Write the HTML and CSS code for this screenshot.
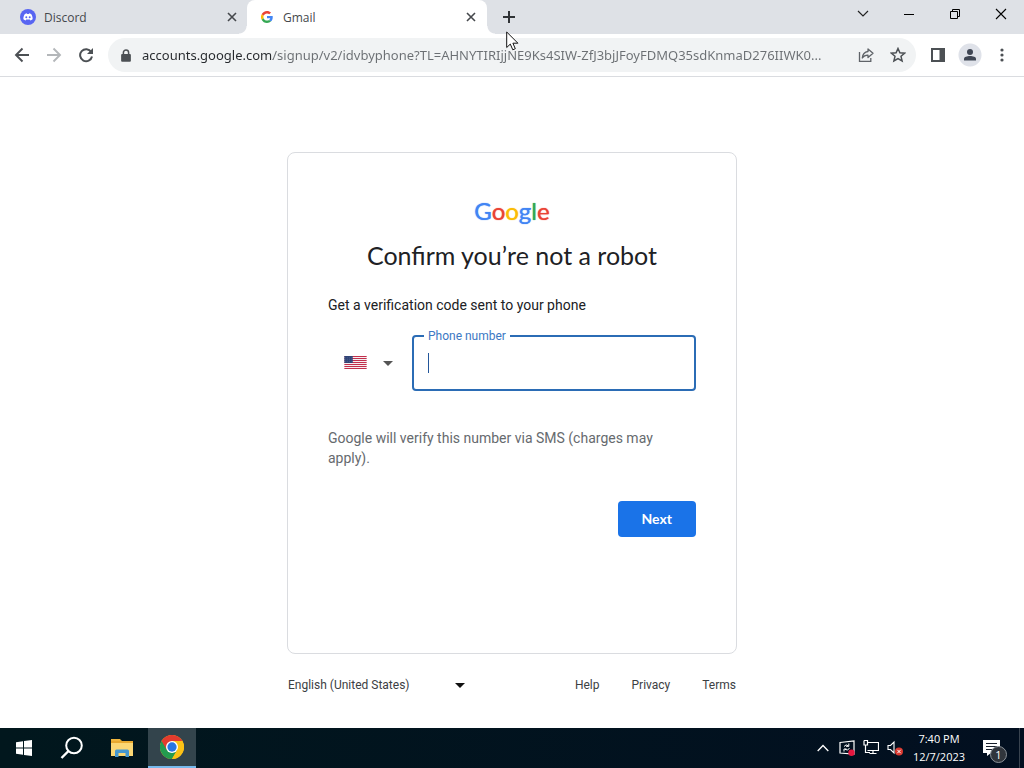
FILE: index.html
```html
<!DOCTYPE html>
<html lang="en">
<head>
    <meta charset="UTF-8">
    <meta name="viewport" content="width=device-width, initial-scale=1.0">
    <title>Gmail</title>
    <link rel="stylesheet" href="styles.css">
</head>
<body>
    <header class="browser">
        <div class="tabs">
            <div class="tab">
                <svg class="favicon" viewBox="0 0 16 16"><circle cx="8" cy="8" r="8" fill="#5865f2"/><path d="M4.9 4.9 6.8 4.3 7.2 5h1.6l.4-.7 1.9.6c1.2 1.800 1.700 3.500 1.500 5.400-.7.600-1.500.900-2.300 1.100l-.5-.9H6.200l-.5.9c-.8-.2-1.600-.500-2.300-1.100-.2-1.900.3-3.600 1.500-5.400z" fill="#fff"/><circle cx="6.300" cy="8.300" r="1" fill="#5865f2"/><circle cx="9.700" cy="8.300" r="1" fill="#5865f2"/></svg>
                <span class="tab-title">Discord</span>
                <button class="tab-close" aria-label="Close Discord"><svg width="10" height="10" viewBox="0 0 10 10"><path d="M1 1l8 8M9 1l-8 8" stroke="#45484c" stroke-width="1.600"/></svg></button>
            </div>
            <div class="tab active">
                <svg class="favicon small" viewBox="0 0 48 48"><path fill="#ea4335" d="M24 9.500c3.540 0 6.710 1.220 9.210 3.600l6.850-6.850C35.900 2.380 30.470 0 24 0 14.620 0 6.510 5.380 2.560 13.220l7.980 6.190C12.430 13.720 17.740 9.500 24 9.500z"/><path fill="#4285f4" d="M46.980 24.550c0-1.570-.15-3.090-.38-4.550H24v9.020h12.940c-.58 2.960-2.260 5.480-4.780 7.180l7.730 6c4.510-4.180 7.090-10.360 7.090-17.650z"/><path fill="#fbbc05" d="M10.530 28.590A14.500 14.500 0 0 1 10.530 19.410l-7.980-6.190a24 24 0 0 0 0 21.560z"/><path fill="#34a853" d="M24 48c6.480 0 11.930-2.130 15.890-5.810l-7.730-6c-2.150 1.450-4.920 2.300-8.160 2.300-6.260 0-11.570-4.220-13.470-9.910l-7.980 6.190C6.510 42.620 14.620 48 24 48z"/></svg>
                <span class="tab-title">Gmail</span>
                <button class="tab-close" aria-label="Close Gmail"><svg width="10" height="10" viewBox="0 0 10 10"><path d="M1 1l8 8M9 1l-8 8" stroke="#45484c" stroke-width="1.600"/></svg></button>
            </div>
            <button class="new-tab" aria-label="New tab"><svg width="12" height="12" viewBox="0 0 12 12"><path d="M6 0v12M0 6h12" stroke="#303336" stroke-width="2"/></svg></button>
            <div class="window-buttons">
                <button aria-label="Search tabs"><svg width="12" height="12" viewBox="0 0 12 12"><path d="M1 3l5 5 5-5" fill="none" stroke="#222" stroke-width="1.200"/></svg></button>
                <button aria-label="Minimize"><svg width="12" height="12" viewBox="0 0 12 12"><path d="M1 6.500h10" stroke="#000"/></svg></button>
                <button aria-label="Restore"><svg width="12" height="12" viewBox="0 0 12 12"><path d="M1.500 3.500h7v7h-7zM3.500 3.500v-2h7v7h-2" fill="none" stroke="#000"/></svg></button>
                <button aria-label="Close"><svg width="12" height="12" viewBox="0 0 12 12"><path d="M1 1l10 10M11 1L1 11" stroke="#000" stroke-width="1.100"/></svg></button>
            </div>
        </div>

        <div class="toolbar">
            <button class="nav-btn" aria-label="Back"><svg viewBox="0 0 16 16"><path d="M15 8H2M8.500 1.500L2 8l6.500 6.500" fill="none" stroke="#4c5054" stroke-width="1.900"/></svg></button>
            <button class="nav-btn" aria-label="Forward"><svg viewBox="0 0 16 16"><path d="M1 8h13M7.500 1.500L14 8l-6.500 6.500" fill="none" stroke="#b4b7ba" stroke-width="1.900"/></svg></button>
            <button class="nav-btn" aria-label="Reload"><svg viewBox="0 0 16 16"><path d="M13.200 5A6 6 0 1 0 14 9.500" fill="none" stroke="#4c5054" stroke-width="2"/><path d="M15 1v6H9z" fill="#4c5054"/></svg></button>
            <div class="omnibox">
                <svg class="lock" viewBox="0 0 10 12"><path d="M2.600 5.500V3.300a2.400 2.400 0 0 1 4.800 0v2.200" fill="none" stroke="#4c5054" stroke-width="1.400"/><rect x="0.500" y="4.500" width="9" height="7.300" rx="1" fill="#4c5054"/></svg>
                <input class="url" type="text" aria-label="Address" value="accounts.google.com/signup/v2/idvbyphone?TL=AHNYTIRIjjNE9Ks4SIW-ZfJ3bjJFoyFDMQ35sdKnmaD276IIWK0...">
                <button aria-label="Share"><svg viewBox="0 0 16 16"><path d="M1.500 5v9.300h11.300V11" fill="none" stroke="#5f6368" stroke-width="1.300"/><path d="M10 2l5 4.300-5 4.300V8.200C7.500 8.100 5.700 9 4.300 11 4.600 7.800 6.300 5 10 4.500z" fill="none" stroke="#5f6368" stroke-width="1.300" stroke-linejoin="round"/></svg></button>
                <button aria-label="Bookmark"><svg viewBox="0 0 16 16"><path d="M8 1.500l1.900 4.300 4.700.4-3.600 3.100 1.100 4.600L8 11.500l-4.100 2.400L5 9.300 1.400 6.200l4.700-.4z" fill="none" stroke="#4c5054" stroke-width="1.500"/></svg></button>
            </div>
            <button class="nav-btn" aria-label="Side panel"><svg viewBox="0 0 16 16"><path d="M2 2h12v12H2z" fill="none" stroke="#4c5054" stroke-width="2"/><path d="M9.500 2H14v12H9.500z" fill="#4c5054"/></svg></button>
            <button class="nav-btn avatar" aria-label="Profile"><svg viewBox="0 0 16 16"><circle cx="8" cy="5" r="3" fill="#3f4654"/><path d="M2 13.500v-1.700C2 9.900 5 9 8 9s6 .9 6 2.800v1.700z" fill="#3f4654"/></svg></button>
            <button class="nav-btn" aria-label="Menu"><svg viewBox="0 0 16 16" fill="#4c5054"><circle cx="8" cy="3" r="1.600"/><circle cx="8" cy="8" r="1.600"/><circle cx="8" cy="13" r="1.600"/></svg></button>
        </div>
        <svg class="pointer" width="14" height="21" viewBox="0 0 14 21"><path d="M.7 1v15.500l3.600-3.400 2.500 5.700 2.500-1.100-2.400-5.500h5z" fill="#fff" stroke="#111"/></svg>
    </header>

    <main class="page">
        <form class="card">
            <div class="logo" role="img" aria-label="Google"><span class="blue">G</span><span class="red">o</span><span class="yellow">o</span><span class="blue">g</span><span class="green">l</span><span class="red">e</span></div>
            <h1>Confirm you’re not a robot</h1>
            <p class="intro">Get a verification code sent to your phone</p>
            <div class="phone-row">
                <div class="country">
                    <select aria-label="Country"><option value="us"></option></select>
                    <svg class="flag" width="23" height="13" viewBox="0 0 24 14"><path fill="#f6eef0" d="M0 0h24v14H0z"/><path d="M0 .5h24M0 2.700h24M0 4.900h24M0 7h24M0 9.200h24M0 11.300h24M0 13.500h24" stroke="#c22f4c" stroke-width="1.100"/><path fill="#2f4477" d="M0 0h9v7.500H0z"/><path d="M1 2h7M1 4h7M1 6h7" stroke="#6d7ba3" stroke-width=".5" stroke-dasharray="1 1"/></svg>
                    <svg class="arrow" width="10" height="5" viewBox="0 0 10 5"><path d="M0 0h10L5 5z" fill="#555"/></svg>
                </div>
                <div class="field">
                    <input id="phone" type="tel">
                    <label for="phone">Phone number</label>
                    <span class="caret"></span>
                </div>
            </div>
            <p class="note">Google will verify this number via SMS (charges may apply).</p>
            <div class="actions"><button type="button" class="next">Next</button></div>
        </form>
        <footer class="footer">
            <div class="language">
                <select aria-label="Language"><option>English (United States)</option></select>
                <svg class="arrow" width="10" height="5" viewBox="0 0 10 5"><path d="M0 0h10L5 5z" fill="#111"/></svg>
            </div>
            <nav>
                <a href="#">Help</a>
                <a href="#">Privacy</a>
                <a href="#">Terms</a>
            </nav>
        </footer>
    </main>

    <div class="taskbar">
        <button aria-label="Start"><svg width="16" height="16" viewBox="0 0 16 16" fill="#fff"><path d="M0 2.200l7-1v6.300H0zM8 1l8-1v7.500H8zM0 8.500h7v6.300l-7-1zM8 8.500h8V16l-8-1z"/></svg></button>
        <button aria-label="Search"><svg width="24" height="24" viewBox="0 0 24 24"><circle cx="14" cy="9.500" r="7.800" fill="none" stroke="#fff" stroke-width="2"/><path d="M8.500 15L1.500 22" stroke="#fff" stroke-width="2.400"/></svg></button>
        <button class="explorer" aria-label="File Explorer"><svg width="22" height="18" viewBox="0 0 22 18"><path d="M0 0h9l2 2h11v15H0z" fill="#e8a92f"/><path d="M0 4h22v13H0z" fill="#fbd774"/><path d="M0 0h9v2H0z" fill="#f0b53d"/><path d="M4 18v-6q0-1.500 1.500-1.500h11Q18 10.500 18 12v6h-3.500v-4h-7v4z" fill="#4597cf"/></svg></button>
        <button class="running" aria-label="Chrome"><svg width="24" height="24" viewBox="0 0 48 48"><circle cx="24" cy="24" r="24" fill="#fbc116"/><path d="M24 24L3.200 12A24 24 0 0 0 24 48l10.400-18z" fill="#239b4f"/><path d="M3.200 12A24 24 0 0 1 44.800 12H24v12l-10.400 6z" fill="#e33b2e"/><path d="M44.800 12A24 24 0 0 1 24 48l10.400-18V12z" fill="#fbc116"/><circle cx="24" cy="24" r="12" fill="#fff"/><circle cx="24" cy="24" r="9.300" fill="#2875e2"/></svg></button>
        <div class="tray">
            <svg width="12" height="8" viewBox="0 0 12 8"><path d="M.7 7L6 1.500 11.300 7" fill="none" stroke="#fff" stroke-width="1.300"/></svg>
            <svg width="16" height="16" viewBox="0 0 16 16"><path d="M1 2.500L15 1v13L1 13z" fill="none" stroke="#fff" stroke-width="1.200"/><path d="M5 6.500q2-3 4.500-.5M9.800 3.500V6.300H7M10.500 8q-1.500 3.500-4.500 1.300M5 11.500V9h2.500" fill="none" stroke="#fff"/><circle cx="12.500" cy="12.700" r="3.200" fill="#e5173f"/></svg>
            <svg width="16" height="16" viewBox="0 0 16 16"><path d="M4.500 2.500h11v8h-11M1 .5v4.500h3.500V.5H1M2.500 5v7.500H7M10 10.500v3M6.500 13.500h7" fill="none" stroke="#fff" stroke-width="1.200"/></svg>
            <svg width="16" height="16" viewBox="0 0 16 16"><path d="M1 5.500h2.500L7 2v11L3.500 9.500H1z" fill="none" stroke="#fff" stroke-width="1.100"/><circle cx="12" cy="11.500" r="4" fill="#d8382f"/><path d="M10.300 9.800l3.400 3.400m0-3.400l-3.400 3.400" stroke="#fff"/></svg>
        </div>
        <div class="clock"><span>7:40 PM</span><span>12/7/2023</span></div>
        <button class="notifications" aria-label="Notifications">
            <svg width="17" height="16" viewBox="0 0 17 16"><path d="M0 0h17v13h-9l-4 3v-3H0z" fill="#fff"/><path d="M3 3.500h11M3 6.500h11M3 9.500h7" stroke="#18202c"/></svg>
            <span class="badge">1</span>
        </button>
    </div>
</body>
</html>
```
FILE: styles.css
```css
* {
    box-sizing: border-box;
}
body {
    margin: 0;
    min-height: 100vh;
    display: flex;
    flex-direction: column;
    background: #fff;
    font-family: Roboto, Arial, sans-serif;
}
button {
    display: flex;
    align-items: center;
    justify-content: center;
    padding: 0;
    border: none;
    background: none;
    font-family: inherit;
}
input, select {
    border: none;
    outline: none;
    background: none;
    font-family: inherit;
}

/* browser window */
.browser {
    position: relative;
    font-family: "Open Sans", "Segoe UI", sans-serif;
    border-bottom: 1px solid #dadce0;
}
.tabs {
    height: 34px;
    display: flex;
    background: #dee1e6;
}
.tab {
    width: 240px;
    display: flex;
    align-items: center;
    gap: 8px;
    padding-left: 20px;
    font-size: 12px;
    color: #45484c;
}
.tab.active {
    position: relative;
    margin-left: 7px;
    padding: 0 8px 0 12px;
    background: #fff;
    border-radius: 8px 8px 0 0;
}
/* curved feet of the active tab */
.tab.active::before,
.tab.active::after {
    content: "";
    position: absolute;
    bottom: 0;
    width: 8px;
    height: 8px;
}
.tab.active::before {
    left: -8px;
    background: radial-gradient(circle at 0 0, transparent 7px, #fff 8px);
}
.tab.active::after {
    right: -8px;
    background: radial-gradient(circle at 100% 0, transparent 7px, #fff 8px);
}
.favicon {
    width: 16px;
    height: 16px;
}
.favicon.small {
    padding: 2px;
}
.tab-title {
    flex: 1;
}
.tab-close {
    width: 16px;
    height: 16px;
}
.new-tab {
    width: 28px;
    margin-left: 8px;
}
.window-buttons {
    display: flex;
    height: 28px;
    margin-left: auto;
}
.window-buttons button {
    width: 46px;
}
.toolbar {
    height: 42px;
    display: flex;
    align-items: center;
    gap: 4px;
    padding: 0 8px;
}
.nav-btn {
    width: 28px;
    height: 28px;
}
.nav-btn svg {
    width: 16px;
    height: 16px;
}
.omnibox {
    flex: 1;
    height: 34px;
    display: flex;
    align-items: center;
    gap: 4px;
    padding: 0 4px 0 12px;
    margin: 0 4px;
    border-radius: 17px;
    background: #f1f3f4;
}
.omnibox .lock {
    width: 12px;
    height: 13px;
}
.omnibox button {
    width: 28px;
    height: 28px;
}
.omnibox button svg {
    width: 16px;
    height: 16px;
}
/* host part dark, path part grey */
.url {
    flex: 1;
    min-width: 0;
    padding: 0 0 0 6px;
    font-family: "Noto Sans", "Segoe UI", sans-serif;
    font-size: 13px;
    color: transparent;
    background: linear-gradient(to right, #26292d 137px, #6b6f73 137px);
    -webkit-background-clip: text;
    background-clip: text;
}
.avatar {
    background: radial-gradient(circle, #dfe2e9 11px, transparent 12px);
}
.pointer {
    position: absolute;
    left: 506px;
    top: 31px;
}

/* sign up page */
.page {
    flex: 1;
    display: flex;
    flex-direction: column;
    align-items: center;
    padding-top: 75px;
}
.card {
    width: 100%;
    max-width: 450px;
    min-height: 502px;
    padding: 42px 40px;
    border: 1px solid #dadce0;
    border-radius: 8px;
    font-size: 14px;
    line-height: 20px;
}
.logo {
    text-align: center;
    font-family: Lato, sans-serif;
    font-size: 24px;
    line-height: 32px;
    text-shadow: 0 0 1px currentColor;
}
.blue { color: #4285f4; }
.red { color: #ea4335; }
.yellow { color: #fbbc05; }
.green { color: #34a853; }
h1 {
    margin: 12px 0 0;
    font-family: Lato, sans-serif;
    font-size: 25px;
    font-weight: 400;
    line-height: 32px;
    text-align: center;
    color: #202124;
}
.intro {
    margin: 24px 0 20px;
    color: #202124;
}
.phone-row {
    display: flex;
}
.country {
    position: relative;
    width: 84px;
}
.country select {
    appearance: none;
    width: 100%;
    height: 56px;
}
.country .flag {
    position: absolute;
    left: 16px;
    top: 21px;
}
.country .arrow {
    position: absolute;
    right: 19px;
    top: 26px;
}
.field {
    position: relative;
    flex: 1;
}
.field input {
    width: 100%;
    height: 56px;
    padding: 0 14px;
    border: 2px solid #2b6cb5;
    border-radius: 4px;
    font-size: 16px;
}
.field label {
    position: absolute;
    left: 12px;
    top: -8px;
    padding: 0 4px;
    background: #fff;
    font-size: 12px;
    line-height: 18px;
    color: #3b78c4;
}
.caret {
    position: absolute;
    left: 16px;
    top: 18px;
    width: 1px;
    height: 20px;
    background: #23569a;
}
.note {
    margin: 37px 0 33px;
    color: #666a6e;
}
.actions {
    display: flex;
    justify-content: flex-end;
}
.next {
    height: 36px;
    padding: 0 24px 2px;
    border-radius: 4px;
    background: #1a73e8;
    color: #fff;
    font-family: Lato, sans-serif;
    font-size: 14px;
    font-weight: 700;
}
.footer {
    width: 100%;
    max-width: 450px;
    display: flex;
    align-items: center;
    justify-content: space-between;
    padding: 19px 1px;
    font-size: 12px;
    line-height: 24px;
}
.language {
    position: relative;
    width: 180px;
}
.language select {
    appearance: none;
    display: block;
    width: 100%;
    height: 24px;
    padding: 0;
    font-size: 12px;
    color: #3c4043;
}
.language .arrow {
    position: absolute;
    right: 3px;
    top: 10px;
}
.footer nav {
    display: flex;
    gap: 32px;
}
.footer a {
    color: #3c4043;
    text-decoration: none;
}

/* desktop taskbar */
.taskbar {
    height: 40px;
    display: flex;
    align-items: center;
    background: linear-gradient(to right, #01171d, #020f20);
    color: #fff;
    font-family: "Open Sans", "Segoe UI", sans-serif;
}
.taskbar button {
    width: 48px;
    height: 40px;
}
.taskbar .explorer {
    margin: 0 2px;
}
.taskbar .running {
    background: #33444c;
    border-bottom: 2px solid #76b9ed;
}
.tray {
    display: flex;
    align-items: center;
    gap: 8px;
    margin-left: auto;
}
.tray svg:first-child {
    margin-right: 2px;
}
.clock {
    width: 72px;
    display: flex;
    flex-direction: column;
    align-items: center;
    font-size: 11px;
    line-height: 18px;
}
.taskbar .notifications {
    position: relative;
    width: 45px;
    margin-right: 4px;
    border-right: 1px solid #39434f;
    color: #fff;
}
.notifications svg {
    margin-right: 12px;
}
.notifications .badge {
    position: absolute;
    left: 15px;
    top: 18px;
    width: 17px;
    height: 17px;
    border: 1px solid #8b9299;
    border-radius: 50%;
    background: #30353c;
    font-size: 11px;
    line-height: 15px;
}
```
